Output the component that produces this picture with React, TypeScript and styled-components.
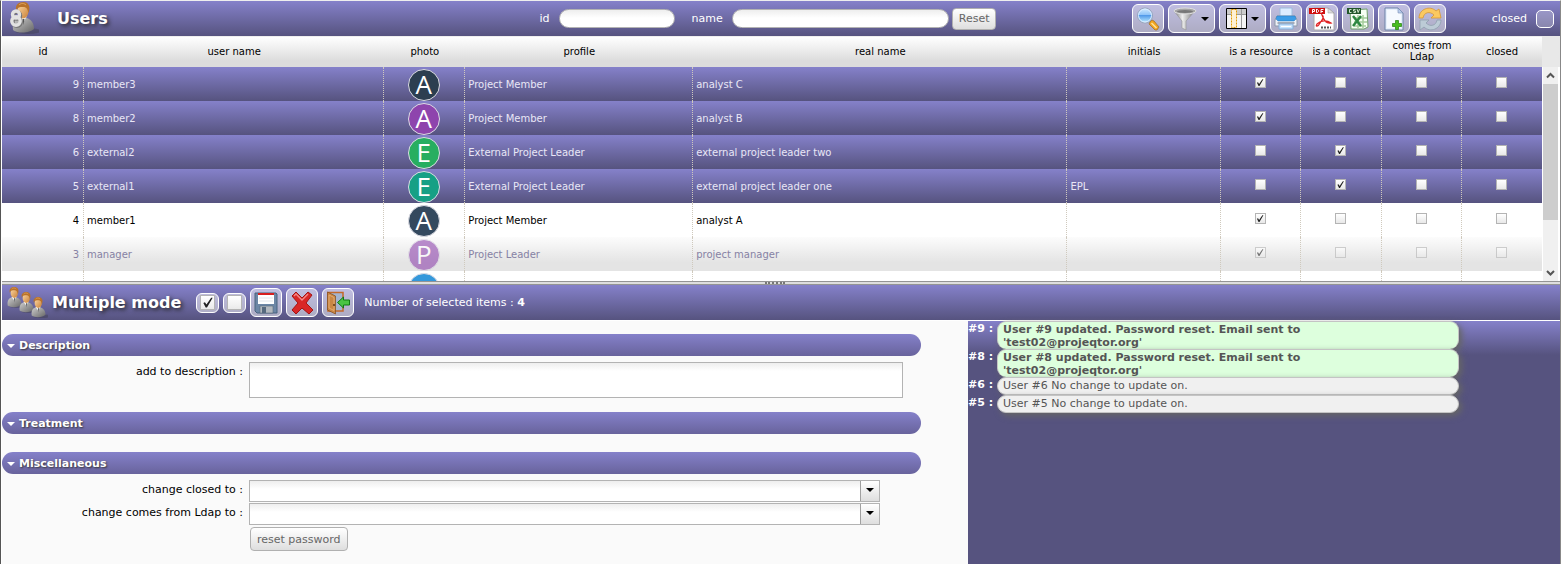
import React from 'react';
import styled, { createGlobalStyle, css } from 'styled-components';

const GlobalStyle = createGlobalStyle`
  *, *::before, *::after { box-sizing: border-box; }
  html, body, #root { height: 100%; }
  body {
    margin: 0;
    background: #fafafa;
    color: #000;
    font: 11px/14px Verdana, "DejaVu Sans", sans-serif;
    overflow: hidden;
  }
  button, input, select, textarea { font: inherit; margin: 0; }
`;

const barGradient = 'linear-gradient(#8581ca, #56537f)';
const controlGradient = 'linear-gradient(#ffffff, #dedede)';
const fieldGradient = 'linear-gradient(#eeeeee, #ffffff 8px)';

const Page = styled.div`
  display: flex;
  flex-direction: column;
  min-height: 100%;
  border-left: 1px solid #555;
  border-right: 1px solid #888;
  border-top: 1px solid #eee;
  padding-left: 1px;
  background: #fff;
`;

const Bar = styled.header`
  display: flex;
  align-items: center;
  height: 35px;
  flex: none;
  background: ${barGradient};
  color: #fff;
`;

const TitleArea = styled.div`
  display: flex;
  align-items: center;
  gap: 4px;
  padding-left: 4px;
`;

const ListTitleArea = styled(TitleArea)`
  width: 34.5%;
  gap: 18px;
`;

const Title = styled.h1`
  margin: 0;
  font-size: 16px;
  line-height: 20px;
  white-space: nowrap;
  text-shadow: 2px 2px 4px #222;
`;

const FilterArea = styled.form`
  display: flex;
  align-items: center;
`;

const FilterLabel = styled.label`
  display: flex;
  align-items: center;
  gap: 9px;
  margin-right: 17px;
  &:last-of-type { margin-right: 3px; }
`;

const FilterInput = styled.input<{ $width: number }>`
  width: ${p => p.$width}px;
  height: 19px;
  border: 1px solid #b3b3b3;
  border-radius: 10px;
  padding: 0 8px;
  background: ${fieldGradient};
`;

const PlainButton = styled.button`
  height: 22px;
  padding: 1px 6px 0;
  border: 1px solid #b0b0b0;
  border-radius: 4px;
  background: ${controlGradient};
  color: #666;
`;

const Tools = styled.div`
  display: flex;
  align-items: center;
  gap: 4px;
  margin-left: auto;
`;

const ToolButton = styled.button`
  display: flex;
  align-items: center;
  justify-content: center;
  gap: 4px;
  height: 29px;
  width: 32px;
  padding: 0;
  border: 1px solid #fff;
  border-radius: 6px;
  background: rgba(255, 255, 255, 0.5);
`;

const WideToolButton = styled(ToolButton)`
  width: 47px;
`;

const Caret = styled.i`
  border: solid transparent;
  border-width: 4px 4px 0;
  border-top-color: #000;
`;

const ClosedLabel = styled.label`
  display: flex;
  align-items: center;
  gap: 9px;
  margin: 0 6px 0 42px;
`;

const ClosedBox = styled.input`
  appearance: none;
  width: 18px;
  height: 18px;
  border: 1px solid #fff;
  border-radius: 5px;
  background: rgba(255, 255, 255, 0.25);
`;

const tick = css`
  &:checked::before {
    content: '';
    display: block;
    width: 100%;
    height: 100%;
    background: #222;
    clip-path: polygon(16% 54%, 28% 48%, 40% 66%, 76% 14%, 88% 14%, 44% 88%, 34% 88%);
  }
`;

const ListPane = styled.section`
  display: flex;
  flex: none;
  height: 245px;
`;

const GridScroll = styled.div`
  flex: 1;
  min-width: 0;
  overflow-y: auto;
  scrollbar-width: none;
`;

const Grid = styled.table`
  width: 100%;
  table-layout: fixed;
  border-collapse: separate;
  border-spacing: 0;
  font-size: 10px;
  line-height: 12px;
`;

const HeadCell = styled.th`
  position: sticky;
  top: 0;
  z-index: 1;
  height: 31px;
  padding: 0 6px 2px;
  border-top: 1px solid #eee;
  background: linear-gradient(#fff, #dcdcdc 80%);
  font-weight: normal;
  text-align: center;
  line-height: 11px;
`;

type Tone = 'selected' | 'plain' | 'shaded';

const rowTones = {
  selected: css`background: ${barGradient}; color: #e9e7f6;`,
  plain: css`background: #fff; color: #000;`,
  shaded: css`background: linear-gradient(#fcfcfc, #e4e4e4 75%); color: #8682a4;`,
};

const Row = styled.tr<{ $tone: Tone }>`
  ${p => rowTones[p.$tone]}
  input, span { opacity: ${p => (p.$tone === 'shaded' ? 0.6 : 1)}; }
`;

const Cell = styled.td<{ $align?: string }>`
  height: 34px;
  padding: 2px 4px 0 3px;
  border-right: 1px dotted #cfc9bd;
  text-align: ${p => p.$align ?? 'left'};
  white-space: nowrap;
  overflow: hidden;
  &:last-child { border-right-color: transparent; }
`;

const MiddleCell = styled(Cell)`
  padding: 0 1px 0 0;
`;

const Avatar = styled.span<{ $color: string }>`
  display: flex;
  align-items: center;
  justify-content: center;
  width: 32px;
  height: 32px;
  margin: 2px auto 0;
  padding-bottom: 3px;
  border: 1px solid #dcdce4;
  border-radius: 50%;
  background: ${p => p.$color};
  color: #fff;
  font: 26px/28px "Open Sans", "DejaVu Sans", sans-serif;
`;

const GridCheck = styled.input`
  appearance: none;
  display: block;
  width: 11px;
  height: 11px;
  margin: 0 auto 3px;
  border: 1px solid #b4b4b4;
  background: linear-gradient(#fff, #e8e8e8);
  ${tick}
`;

const ScrollColumn = styled.div`
  display: flex;
  flex-direction: column;
  width: 18px;
  padding: 31px 2px 0 1px;
  background: linear-gradient(#e8e8e8 31px, #fff 31px);
`;

const ScrollTrack = styled.div`
  display: flex;
  flex-direction: column;
  align-items: center;
  flex: 1;
  background: #f0f0f0;
`;

const ScrollThumb = styled.div`
  width: 100%;
  height: 136px;
  margin-bottom: auto;
  background: #cdcdcd;
`;

const ScrollArrow = styled.svg`
  flex: none;
  width: 15px;
  height: 17px;
`;

const Splitter = styled.div`
  display: flex;
  justify-content: center;
  align-items: center;
  flex: none;
  height: 4px;
  padding-right: 12px;
  border-top: 1px solid #949494;
  border-bottom: 1px solid #949494;
  background: #dedede;
`;

const SplitterGrip = styled.i`
  width: 20px;
  border-top: 2px dotted #777;
`;

const CheckButton = styled.label`
  display: flex;
  align-items: center;
  justify-content: center;
  width: 23px;
  height: 20px;
  border: 1px solid #fff;
  border-radius: 6px;
  background: rgba(255, 255, 255, 0.5);
`;

const CheckButtonInput = styled.input`
  appearance: none;
  width: 15px;
  height: 15px;
  border: 1px solid #b4b4b4;
  background: linear-gradient(#fff, #eaeaea);
  ${tick}
`;

const SelectionTools = styled(Tools)`
  margin-left: 15px;
`;

const SelectionCount = styled.p`
  margin: 0 0 0 10px;
`;

const DetailPane = styled.main`
  display: flex;
  flex: 1;
  border-top: 1px solid #fff;
`;

const FormPane = styled.form`
  width: 62%;
  padding: 13px 47px 0 0;
  background: #fafafa;
`;

const Section = styled.section`
  margin-bottom: 14px;
  &:nth-of-type(2) { margin-bottom: 18px; }
`;

const SectionTitle = styled.h2`
  display: flex;
  align-items: center;
  gap: 4px;
  height: 22px;
  margin: 0 0 6px;
  padding: 1px 0 0 5px;
  border-radius: 11px;
  background: linear-gradient(#8581ca, #68639c);
  color: #fff;
  font-size: 11px;
  text-shadow: 1px 1px 2px #333;
  &:last-child { margin-bottom: 0; }
`;

const SectionArrow = styled.i`
  border: solid transparent;
  border-width: 4px 4px 0;
  border-top-color: #fff;
`;

const Field = styled.div`
  display: grid;
  grid-template-columns: 241px 1fr;
  column-gap: 6px;
  margin-bottom: 1px;
`;

const FieldLabel = styled.label`
  padding-top: 3px;
  text-align: right;
`;

const TextArea = styled.textarea`
  display: block;
  width: calc(100% - 18px);
  height: 36px;
  border: 1px solid #b3b3b3;
  border-radius: 0;
  background: ${fieldGradient};
  resize: none;
`;

const SelectBox = styled.div`
  display: flex;
  width: calc(100% - 41px);
  height: 22px;
  border: 1px solid #b3b3b3;
`;

const Select = styled.select`
  appearance: none;
  flex: 1;
  border: 0;
  border-right: 1px solid #a0a0a0;
  border-radius: 0;
  background: ${fieldGradient};
`;

const SelectArrow = styled.span`
  display: flex;
  align-items: center;
  justify-content: center;
  width: 18px;
  padding: 0 0 2px;
  background: ${controlGradient};
`;

const ResetPassword = styled(PlainButton)`
  justify-self: start;
  height: 24px;
  margin: 1px 0 0 1px;
`;

const ResultPane = styled.aside`
  flex: 1;
  min-width: 0;
  background: linear-gradient(#8581ca, #56537f 34px);
`;

const ResultList = styled.ul`
  margin: 0;
  padding: 0;
  list-style: none;
`;

const Result = styled.li`
  display: grid;
  grid-template-columns: 29px 78%;
  line-height: 13px;
`;

const ResultId = styled.b`
  padding-top: 1px;
  color: #fff;
`;

const ResultMessage = styled.div<{ $updated?: boolean }>`
  min-height: 18px;
  padding: 1px 130px 0 5px;
  border: 1px solid #c4c4c4;
  border-bottom-width: ${p => (p.$updated ? 0 : 1)}px;
  border-radius: 9px;
  box-shadow: 3px 3px 6px #666;
  background: ${p => (p.$updated ? '#ddffdd' : '#f0f0f0')};
  color: #555;
  font-weight: ${p => (p.$updated ? 'bold' : 'normal')};
`;

const Person = ({ x = 0, y = 0, scale = 1 }: { x?: number; y?: number; scale?: number }) => (
  <g transform={`translate(${x} ${y}) scale(${scale})`}>
    <ellipse cx="16" cy="29" rx="13" ry="3" fill="#333" opacity=".3" />
    <path d="M1 28c-1-8 2-12 8-13 8 0 13 4 13 12-4 4-16 5-21 1z" fill="url(#suit)" />
    <path d="M7 15l4 6 4-7z" fill="#f5f5f5" />
    <path d="M10.500 17l1 6 1-6z" fill="#555" />
    <ellipse cx="11" cy="9" rx="5.500" ry="7.500" fill="url(#skin)" />
    <path d="M4.500 9c-2-6 2-9 7-9 6 0 7 6 5 11-1-4-2-6-5-6-4 0-6 0-7 4z" fill="#b8722a" />
    <path d="M7 3c2-2 5-2 7 0" fill="none" stroke="#e0a560" />
  </g>
);

const PeopleGradients = () => (
  <defs>
    <linearGradient id="suit" x1="0" y1="0" x2="1" y2="1">
      <stop offset="0" stopColor="#d0d0d0" />
      <stop offset="1" stopColor="#666" />
    </linearGradient>
    <linearGradient id="skin" x1="0" y1="0" x2="1" y2="1">
      <stop offset="0" stopColor="#ffdca8" />
      <stop offset="1" stopColor="#c87f35" />
    </linearGradient>
  </defs>
);

const UserIcon = () => (
  <svg width="33" height="33" viewBox="0 0 33 33">
    <PeopleGradients />
    <Person x={6} y={0} />
    <g fill="none" stroke="#777" strokeWidth="3.500" transform="translate(1 1)">
      <circle cx="10" cy="12.500" r="3.500" /><circle cx="10" cy="19" r="4.200" />
    </g>
    <g fill="none" stroke="#e2e2e2" strokeWidth="3.400">
      <circle cx="10" cy="12.500" r="3.500" /><circle cx="10" cy="19" r="4.200" />
    </g>
  </svg>
);

const PeopleIcon = () => (
  <svg width="42" height="34" viewBox="0 0 42 34">
    <Person x={1} y={1} scale={0.66} />
    <Person x={13} y={6} scale={0.66} />
    <Person x={25} y={11} scale={0.66} />
  </svg>
);

const SearchIcon = () => (
  <svg width="24" height="24" viewBox="0 0 24 24">
    <defs>
      <linearGradient id="lens" x1="0" y1="0" x2="0" y2="1">
        <stop offset="0" stopColor="#d4ecff" />
        <stop offset=".45" stopColor="#8fc4f8" />
        <stop offset=".5" stopColor="#539bea" />
        <stop offset="1" stopColor="#c4f0ff" />
      </linearGradient>
    </defs>
    <path d="M14 15l2-2 2 1 5 6-2 3-2 0-6-6z" fill="#f3a51f" stroke="#9a6a28" strokeWidth=".7" />
    <path d="M15.500 16l5 5" stroke="#ffe39a" strokeWidth="1.500" />
    <circle cx="9" cy="8.500" r="7.500" fill="url(#lens)" stroke="#98a5bb" />
    <circle cx="9" cy="8.500" r="6.500" fill="none" stroke="#dcecff" />
  </svg>
);

const FunnelIcon = () => (
  <svg width="24" height="24" viewBox="0 0 24 24">
    <defs>
      <linearGradient id="metal">
        <stop offset="0" stopColor="#777" />
        <stop offset=".4" stopColor="#eee" />
        <stop offset="1" stopColor="#777" />
      </linearGradient>
    </defs>
    <path d="M1 4l8 10v7l4 2v-9l9-10z" fill="url(#metal)" stroke="#999" strokeWidth=".7" />
    <ellipse cx="12" cy="4" rx="11" ry="3" fill="#a5a5a5" stroke="#e0e0e0" />
    <ellipse cx="12" cy="4.500" rx="8" ry="1.500" fill="#777" />
  </svg>
);

const ColumnsIcon = () => (
  <svg width="21" height="21" viewBox="0 0 21 21">
    <path d="M.5.5h20v20H.5z" fill="#f5f5f5" />
    <path d="M1 1h19v5H1z" fill="#ccc" />
    <path d="M1 6.500h19M15.500 1v19" stroke="#999" />
    <path d="M5.500 1.500h5v18h-5z" fill="#fff1d4" stroke="#e29a00" strokeDasharray="2 1" />
    <path d="M.5.5h20v20H.5z" fill="none" stroke="#000" />
  </svg>
);

const PrinterIcon = () => (
  <svg width="24" height="24" viewBox="0 0 24 24">
    <path d="M6 1h12v9H6z" fill="#dcecff" stroke="#9fbcdc" />
    <path d="M3 9h18l2 4v6H1v-6z" fill="#eef1f6" stroke="#8d99ab" />
    <path d="M3 9h18l1 3-2 2H4l-2-2z" fill="#3d9ce6" stroke="#2278c0" strokeWidth=".5" />
    <path d="M3.500 16h17" stroke="#596478" />
    <path d="M5 17h14v5H5z" fill="#c8e4fd" stroke="#85aeda" />
    <path d="M7 19.500h10" stroke="#fff" />
  </svg>
);

const PdfIcon = () => (
  <svg width="26" height="24" viewBox="0 0 26 24">
    <path d="M5 1h14l6 5v17H5z" fill="#fff" stroke="#aaa" />
    <path d="M19 1v5h6z" fill="#ddd" stroke="#999" strokeWidth=".5" />
    <path d="M0 1h16v6H0z" fill="#d01010" />
    <g fill="none" stroke="#fff">
      <path d="M3.500 6V2.500h2v2h-2M7.500 2v3.500h1l1-1v-1l-1-1h-1M12 6V2.500h2.500M12 4.500h2" />
    </g>
    <path d="M13 8c3 2 0 5-2 8-2 4-5 4-3 1 4-4 10-4 14-1-4 1-7-2-9-8z" fill="none" stroke="#e02222" strokeWidth="1.300" />
    <path d="M12 20.500h10" stroke="#555" strokeWidth="2" strokeDasharray="2 1" />
  </svg>
);

const CsvIcon = () => (
  <svg width="24" height="24" viewBox="0 0 24 24">
    <path d="M4 3l17-1 1 18-4 2H5z" fill="#f7fff4" stroke="#6f9f6b" />
    <path d="M8 11h13M8 15h13M8 19h12M12 8v13M17 8v13" stroke="#a4cc9b" strokeWidth="1.500" />
    <path d="M7 9l8 10M15 9L7 19" stroke="#2d8740" strokeWidth="2.500" />
    <path d="M1 1h14v6H1z" fill="#23572b" />
    <g fill="none" stroke="#cfe6cc">
      <path d="M5.500 2.500h-2v3h2M9.500 2.500h-2v1.500h2v1.500h-2M11 2l1.200 3.500L13.500 2" />
    </g>
  </svg>
);

const NewIcon = () => (
  <svg width="22" height="24" viewBox="0 0 22 24">
    <path d="M2 1h13l5 5v17H2z" fill="#e6effc" stroke="#6c82a8" />
    <path d="M4 3h9l5 5v13H4z" fill="#f6faff" />
    <path d="M15 1v5h5z" fill="#b9cdeb" stroke="#6c82a8" strokeWidth=".5" />
    <path d="M12.500 13.500h3v3h3v3h-3v3h-3v-3h-3v-3h3z" fill="#48bd1f" stroke="#23800c" strokeWidth=".7" />
  </svg>
);

const RefreshIcon = () => (
  <svg width="24" height="24" viewBox="0 0 24 24">
    <path d="M1 11C1 2 12-2 18 4l3-2 2 9H13l3-3c-4-4-10-3-11 3z" fill="#fbc960" stroke="#d9982f" strokeWidth=".8" />
    <path d="M23 13c0 9-11 13-17 7l-4 3V13h9l-3 3c4 4 10 3 11-3z" fill="#bccbd6" stroke="#8fa0ae" strokeWidth=".8" />
  </svg>
);

const SaveIcon = () => (
  <svg width="24" height="22" viewBox="0 0 24 22">
    <path d="M1 1h21l1 1v19H3l-2-2z" fill="#6c86a5" stroke="#49627f" />
    <path d="M4 1h16v11H4z" fill="#fff" />
    <path d="M4 1h16v2H4z" fill="#d81f1f" />
    <path d="M5 6h14M5 9h14" stroke="#e2e5ea" />
    <path d="M6 14h13v7H6z" fill="#b3b8be" stroke="#59697a" strokeWidth=".6" />
    <path d="M8 15h4v6H8z" fill="#56697e" />
  </svg>
);

const DeleteIcon = () => (
  <svg width="24" height="24" viewBox="0 0 24 24">
    <path d="M2 5l4-4 6 6 6-6 4 3-6 8 7 7-4 4-7-6-6 6-4-4 6-7z" fill="#d92727" stroke="#a31515" strokeLinejoin="round" />
    <path d="M4 5l2-2 6 6 6-6" fill="none" stroke="#f48a8a" strokeWidth="1.300" />
  </svg>
);

const ExitIcon = () => (
  <svg width="24" height="24" viewBox="0 0 24 24">
    <path d="M2 1.500h15V20H2z" fill="#a4b4cf" stroke="#c4682a" strokeWidth="1.500" />
    <path d="M1.500 1l8 4v18l-8-4z" fill="#c98644" stroke="#7e4a1b" strokeWidth=".7" />
    <path d="M3 4l5 2.500v13L3 17z" fill="none" stroke="#e3ab70" />
    <circle cx="8" cy="14" r="1" fill="#5b3412" />
    <path d="M11.500 11.500l6-5.500v3h6v5h-6v3z" fill="#49c443" stroke="#107a13" />
  </svg>
);

type User = {
  id?: number;
  name?: string;
  letter?: string;
  color: string;
  profile?: string;
  realName?: string;
  initials?: string;
  flags: boolean[];
  tone: Tone;
};

const resource = [true, false, false, false];
const contact = [false, true, false, false];

const users: User[] = [
  { id: 9, name: 'member3', letter: 'A', color: '#2c3e50', profile: 'Project Member', realName: 'analyst C', flags: resource, tone: 'selected' },
  { id: 8, name: 'member2', letter: 'A', color: '#8e44ad', profile: 'Project Member', realName: 'analyst B', flags: resource, tone: 'selected' },
  { id: 6, name: 'external2', letter: 'E', color: '#27ae60', profile: 'External Project Leader', realName: 'external project leader two', flags: contact, tone: 'selected' },
  { id: 5, name: 'external1', letter: 'E', color: '#16a085', profile: 'External Project Leader', realName: 'external project leader one', initials: 'EPL', flags: contact, tone: 'selected' },
  { id: 4, name: 'member1', letter: 'A', color: '#34495e', profile: 'Project Member', realName: 'analyst A', flags: resource, tone: 'plain' },
  { id: 3, name: 'manager', letter: 'P', color: '#8e44ad', profile: 'Project Leader', realName: 'project manager', flags: resource, tone: 'shaded' },
  { color: '#3498db', flags: [], tone: 'plain' },
];

const columns = [
  { label: 'id', width: '82px' },
  { label: 'user name', width: '19.5%' },
  { label: 'photo', width: '81px' },
  { label: 'profile', width: '14.8%' },
  { label: 'real name', width: '24.3%' },
  { label: 'initials', width: 'auto' },
  { label: 'is a resource', width: '80px' },
  { label: 'is a contact', width: '81px' },
  { label: 'comes from Ldap', width: '80px' },
  { label: 'closed', width: '80px' },
];
const flagLabels = columns.slice(6).map(c => c.label);

const results = [
  { id: 9, updated: true, text: "User #9 updated. Password reset. Email sent to 'test02@projeqtor.org'" },
  { id: 8, updated: true, text: "User #8 updated. Password reset. Email sent to 'test02@projeqtor.org'" },
  { id: 6, updated: false, text: 'User #6 No change to update on.' },
  { id: 5, updated: false, text: 'User #5 No change to update on.' },
];

const SelectField = ({ id, label }: { id: string; label: string }) => (
  <Field>
    <FieldLabel htmlFor={id}>{label}</FieldLabel>
    <SelectBox>
      <Select id={id} defaultValue=""><option value="" /></Select>
      <SelectArrow><Caret /></SelectArrow>
    </SelectBox>
  </Field>
);

export default function App() {
  return (
    <Page>
      <GlobalStyle />
      <Bar>
        <ListTitleArea>
          <UserIcon />
          <Title>Users</Title>
        </ListTitleArea>
        <FilterArea>
          <FilterLabel>id <FilterInput $width={116} /></FilterLabel>
          <FilterLabel>name <FilterInput $width={217} /></FilterLabel>
          <PlainButton type="reset">Reset</PlainButton>
        </FilterArea>
        <Tools>
          <ToolButton aria-label="Search"><SearchIcon /></ToolButton>
          <WideToolButton aria-label="Filter"><FunnelIcon /><Caret /></WideToolButton>
          <WideToolButton aria-label="Columns"><ColumnsIcon /><Caret /></WideToolButton>
          <ToolButton aria-label="Print"><PrinterIcon /></ToolButton>
          <ToolButton aria-label="Export to PDF"><PdfIcon /></ToolButton>
          <ToolButton aria-label="Export to CSV"><CsvIcon /></ToolButton>
          <ToolButton aria-label="New user"><NewIcon /></ToolButton>
          <ToolButton aria-label="Refresh"><RefreshIcon /></ToolButton>
          <ClosedLabel>closed <ClosedBox type="checkbox" /></ClosedLabel>
        </Tools>
      </Bar>
      <ListPane>
        <GridScroll>
          <Grid>
            <colgroup>
              {columns.map(c => <col key={c.label} style={{ width: c.width }} />)}
            </colgroup>
            <thead>
              <tr>{columns.map(c => <HeadCell key={c.label} scope="col">{c.label}</HeadCell>)}</tr>
            </thead>
            <tbody>
              {users.map((u, i) => (
                <Row key={i} $tone={u.tone}>
                  <Cell $align="right">{u.id}</Cell>
                  <Cell>{u.name}</Cell>
                  <MiddleCell $align="center"><Avatar $color={u.color}>{u.letter}</Avatar></MiddleCell>
                  <Cell>{u.profile}</Cell>
                  <Cell>{u.realName}</Cell>
                  <Cell>{u.initials}</Cell>
                  {flagLabels.map((label, f) => (
                    <MiddleCell key={label}>
                      {u.flags.length > 0 && (
                        <GridCheck type="checkbox" aria-label={label} checked={u.flags[f]} readOnly />
                      )}
                    </MiddleCell>
                  ))}
                </Row>
              ))}
            </tbody>
          </Grid>
        </GridScroll>
        <ScrollColumn aria-hidden="true">
          <ScrollTrack>
            <ScrollArrow viewBox="0 0 15 17"><path d="M4 10.500L7.500 7l3.500 3.500" fill="none" stroke="#555" strokeWidth="2" /></ScrollArrow>
            <ScrollThumb />
            <ScrollArrow viewBox="0 0 15 17"><path d="M4 7l3.500 3.500L11 7" fill="none" stroke="#555" strokeWidth="2" /></ScrollArrow>
          </ScrollTrack>
        </ScrollColumn>
      </ListPane>
      <Splitter><SplitterGrip /></Splitter>
      <Bar>
        <TitleArea>
          <PeopleIcon />
          <Title as="h2">Multiple mode</Title>
        </TitleArea>
        <SelectionTools>
          <CheckButton><CheckButtonInput type="checkbox" aria-label="Select all" defaultChecked /></CheckButton>
          <CheckButton><CheckButtonInput type="checkbox" aria-label="Unselect all" /></CheckButton>
          <ToolButton aria-label="Save"><SaveIcon /></ToolButton>
          <ToolButton aria-label="Delete"><DeleteIcon /></ToolButton>
          <ToolButton aria-label="Leave multiple mode"><ExitIcon /></ToolButton>
        </SelectionTools>
        <SelectionCount>Number of selected items : <b>4</b></SelectionCount>
      </Bar>
      <DetailPane>
        <FormPane>
          <Section>
            <SectionTitle><SectionArrow />Description</SectionTitle>
            <Field>
              <FieldLabel htmlFor="description">add to description :</FieldLabel>
              <TextArea id="description" />
            </Field>
          </Section>
          <Section>
            <SectionTitle><SectionArrow />Treatment</SectionTitle>
          </Section>
          <Section>
            <SectionTitle><SectionArrow />Miscellaneous</SectionTitle>
            <SelectField id="closed-to" label="change closed to :" />
            <SelectField id="ldap-to" label="change comes from Ldap to :" />
            <Field>
              <span />
              <ResetPassword type="button">reset password</ResetPassword>
            </Field>
          </Section>
        </FormPane>
        <ResultPane>
          <ResultList>
            {results.map(r => (
              <Result key={r.id}>
                <ResultId>#{r.id} :</ResultId>
                <ResultMessage $updated={r.updated}>{r.text}</ResultMessage>
              </Result>
            ))}
          </ResultList>
        </ResultPane>
      </DetailPane>
    </Page>
  );
}
